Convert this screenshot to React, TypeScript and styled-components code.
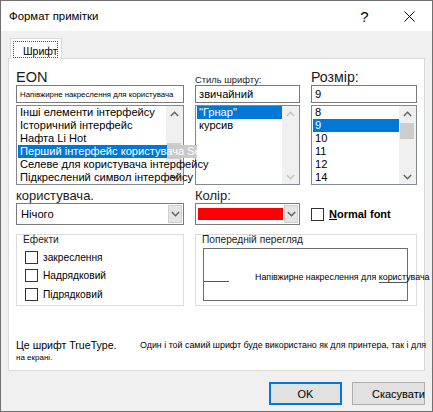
import React from 'react';
import styled, { createGlobalStyle } from 'styled-components';

const fontStack = `"Liberation Sans", "Noto Sans", Arial, sans-serif`;

const GlobalStyle = createGlobalStyle`
  * { box-sizing: border-box; }
  html, body { margin: 0; padding: 0; background: #ffffff; }
  body { font-family: ${fontStack}; color: #000; }
`;

const Window = styled.div`
  width: 433px;
  height: 412px;
  border: 1px solid #707070;
  background: #f0f0f0;
  display: flex;
  flex-direction: column;
  overflow: hidden;
`;

const TitleBar = styled.header`
  height: 30px;
  flex: none;
  background: #ffffff;
  display: flex;
  align-items: center;
  padding-left: 8px;
`;

const Title = styled.span`
  flex: 1;
  font-size: 11.4px;
`;

const TitleButton = styled.div`
  width: 45px;
  height: 30px;
  display: flex;
  align-items: center;
  justify-content: center;
  font-size: 15px;
`;

const Body = styled.div`
  flex: 1;
  display: flex;
  flex-direction: column;
  padding: 7px 7px 0 7px;
`;

const TabStrip = styled.div`
  display: flex;
  padding-left: 2px;
`;

const Tab = styled.div`
  position: relative;
  z-index: 1;
  width: 52px;
  height: 21px;
  margin-bottom: -1px;
  padding: 2px 3px 1px 2px;
  background: #ffffff;
  border: 1px solid #d9d9d9;
  border-bottom: none;
`;

const FocusRing = styled.div`
  height: 100%;
  border: 1px dotted #555;
  font-size: 10.5px;
  line-height: 15px;
  padding-left: 9px;
  padding-top: 2px;
`;

const Panel = styled.section`
  height: 313px;
  background: #ffffff;
  border: 1px solid #d9d9d9;
  padding: 10px 7px 0 7px;
`;

const ColumnGrid = styled.div`
  display: grid;
  grid-template-columns: 168px 105px 106px;
  column-gap: 11px;
`;

const Field = styled.div`
  display: flex;
  flex-direction: column;
`;

const Label = styled.div<{ $size: number }>`
  height: 16px;
  display: flex;
  align-items: flex-end;
  font-size: ${p => p.$size}px;
  line-height: ${p => p.$size + 2}px;
  color: #1b1b1b;
  white-space: nowrap;
`;

const TextBox = styled.div<{ $size?: number }>`
  height: 18px;
  border: 1px solid #7a7a7a;
  padding: 0 3px;
  display: flex;
  align-items: center;
  font-size: ${p => p.$size ?? 11.2}px;
  white-space: nowrap;
  overflow: hidden;
`;

const ListBox = styled.div`
  margin-top: 2px;
  height: 80px;
  border: 1px solid #828790;
  display: flex;
`;

const Items = styled.div`
  position: relative;
  z-index: 1;
  flex: 1;
  min-width: 0;
`;

const Item = styled.div<{ $selected?: boolean; $spill?: number }>`
  height: 13px;
  line-height: 13px;
  margin-left: 1px;
  padding-left: 2px;
  font-size: 11.1px;
  white-space: nowrap;
  color: ${p => (p.$selected ? '#ffffff' : '#000000')};
  background: ${p =>
    p.$selected
      ? p.$spill
        ? `linear-gradient(90deg, #0078d7 0 calc(100% - ${p.$spill}px), #c9c9c9 calc(100% - ${p.$spill}px))`
        : '#0078d7'
      : 'transparent'};
  width: ${p => (p.$spill ? `calc(100% + ${p.$spill}px)` : 'auto')};
  overflow: ${p => (p.$spill ? 'hidden' : 'visible')};
`;

const ScrollBar = styled.div`
  width: 17px;
  flex: none;
  background: #f0f0f0;
  display: flex;
  flex-direction: column;
`;

const ScrollArrow = styled.div`
  height: 15px;
  display: flex;
  align-items: center;
  justify-content: center;
`;

const Track = styled.div`
  flex: 1;
`;

const Thumb = styled.div<{ $top: number }>`
  margin-top: ${p => p.$top}px;
  margin-left: 1px;
  width: 14px;
  height: 16px;
  background: #cdcdcd;
`;

const MidGrid = styled(ColumnGrid)`
  margin-top: 2px;
`;

const Select = styled.div`
  height: 22px;
  border: 1px solid #7a7a7a;
  background: #ffffff;
  display: flex;
  align-items: stretch;
`;

const SelectValue = styled.div`
  flex: 1;
  display: flex;
  align-items: center;
  padding-left: 4px;
  font-size: 11.2px;
`;

const Swatch = styled.div<{ $color: string }>`
  flex: 1;
  margin: 4px 1px 4px 2px;
  background: ${p => p.$color};
`;

const DropButton = styled.div`
  width: 14px;
  margin: 1px 1px 1px 0;
  background: #e5e5e5;
  border: 1px solid #cfcfcf;
  display: flex;
  align-items: center;
  justify-content: center;
`;

const CheckRow = styled.label<{ $bold?: boolean }>`
  display: flex;
  align-items: center;
  gap: 5px;
  font-size: ${p => (p.$bold ? 11 : 10.2)}px;
  font-weight: ${p => (p.$bold ? 700 : 400)};
  white-space: nowrap;
`;

const Box = styled.span`
  width: 13px;
  height: 13px;
  flex: none;
  border: 1px solid #333333;
  background: #ffffff;
`;

const CheckCell = styled.div`
  align-self: end;
  height: 22px;
  display: flex;
  align-items: center;
`;

const GroupGrid = styled.div`
  margin-top: 9px;
  display: grid;
  grid-template-columns: 168px 222px;
  column-gap: 11px;
  height: 72px;
`;

const Group = styled.div`
  border: 1px solid #dcdcdc;
  min-width: 0;
  display: flex;
  flex-direction: column;
`;

const Legend = styled.div`
  margin: -1px 0 0 6px;
  font-size: 10.2px;
  line-height: 12px;
  color: #1b1b1b;
  white-space: nowrap;
`;

const Effects = styled.div`
  margin-top: 2px;
  padding-left: 8px;
  display: flex;
  flex-direction: column;
`;

const EffectRow = styled(CheckRow)`
  height: 18.5px;
`;

const PreviewPane = styled.div`
  position: relative;
  margin: 2px 0 0 7px;
  width: 205px;
  height: 53px;
  border: 1px solid #6d6d6d;
  display: flex;
  align-items: center;
  padding-top: 4px;
`;

const BaseMark = styled.span`
  width: 25px;
  height: 1px;
  flex: none;
  background: #555555;
  align-self: center;
  margin-top: 9px;
`;

const SampleText = styled.span`
  margin-left: 26px;
  font-size: 8.9px;
  white-space: nowrap;
`;

const RightMark = styled.span`
  position: absolute;
  right: 0;
  top: 33px;
  width: 28px;
  height: 1px;
  background: #555555;
`;

const Footer = styled.div`
  margin-top: 32px;
  display: flex;
`;

const FooterLead = styled.div`
  width: 124px;
  flex: none;
  display: flex;
  flex-direction: column;
`;

const FooterLine = styled.div<{ $size: number; $line: number }>`
  font-size: ${p => p.$size}px;
  line-height: ${p => p.$line}px;
  white-space: nowrap;
`;

const ButtonRow = styled.div`
  margin-top: 11px;
  display: flex;
  justify-content: flex-end;
  gap: 10px;
`;

const DialogButton = styled.div<{ $primary?: boolean }>`
  width: 73px;
  height: 23px;
  background: #e1e1e1;
  border: 1px solid ${p => (p.$primary ? '#0078d7' : '#adadad')};
  box-shadow: ${p => (p.$primary ? 'inset 0 0 0 1px #0078d7' : 'none')};
  display: flex;
  align-items: center;
  justify-content: ${p => (p.$primary ? 'center' : 'flex-start')};
  padding-left: ${p => (p.$primary ? 0 : 19)}px;
  font-size: 11px;
  white-space: nowrap;
`;

const Chevron = ({ up, color = '#606060' }: { up?: boolean; color?: string }) => (
  <svg width="9" height="6" viewBox="0 0 9 6">
    <polyline
      points={up ? '0.8,5 4.5,1.2 8.2,5' : '0.8,1 4.5,4.8 8.2,1'}
      fill="none"
      stroke={color}
      strokeWidth="1.4"
    />
  </svg>
);

const CloseIcon = () => (
  <svg width="11" height="11" viewBox="0 0 11 11">
    <path d="M0.5 0.5 L10.5 10.5 M10.5 0.5 L0.5 10.5" stroke="#000" strokeWidth="1" />
  </svg>
);

type ListProps = {
  items: string[];
  selected: number;
  thumbTop?: number;
  disabled?: boolean;
  spill?: number;
};

const List = ({ items, selected, thumbTop, disabled, spill }: ListProps) => {
  const arrow = disabled ? '#c4c4c4' : '#606060';
  return (
    <ListBox>
      <Items>
        {items.map((text, i) => (
          <Item key={text} $selected={i === selected} $spill={i === selected ? spill : undefined}>
            {text}
          </Item>
        ))}
      </Items>
      <ScrollBar>
        <ScrollArrow>
          <Chevron up color={arrow} />
        </ScrollArrow>
        <Track>{thumbTop !== undefined && <Thumb $top={thumbTop} />}</Track>
        <ScrollArrow>
          <Chevron color={arrow} />
        </ScrollArrow>
      </ScrollBar>
    </ListBox>
  );
};

const fonts = [
  'Інші елементи інтерфейсу',
  'Історичний інтерфейс',
  'Нафта Li Hot',
  'Перший інтерфейс користувача Semibold',
  'Селеве для користувача інтерфейсу',
  'Підкреслений символ інтерфейсу',
];

const styles = ['"Грнар"', 'курсив'];
const sizes = ['8', '9', '10', '11', '12', '14'];

export default function App() {
  return (
    <>
      <GlobalStyle />
      <Window>
        <TitleBar>
          <Title>Формат примітки</Title>
          <TitleButton>?</TitleButton>
          <TitleButton>
            <CloseIcon />
          </TitleButton>
        </TitleBar>
        <Body>
          <TabStrip>
            <Tab>
              <FocusRing>Шрифт</FocusRing>
            </Tab>
          </TabStrip>
          <Panel>
            <ColumnGrid>
              <Field>
                <Label $size={14.5}>EON</Label>
                <TextBox $size={7.8}>Напівжирне накреслення для користувача</TextBox>
                <List items={fonts} selected={3} thumbTop={22} spill={30} />
              </Field>
              <Field>
                <Label $size={9.4}>Стиль шрифту:</Label>
                <TextBox>звичайний</TextBox>
                <List items={styles} selected={0} disabled />
              </Field>
              <Field>
                <Label $size={14.2}>Розмір:</Label>
                <TextBox>9</TextBox>
                <List items={sizes} selected={1} thumbTop={2} />
              </Field>
            </ColumnGrid>
            <MidGrid>
              <Field>
                <Label $size={13}>користувача.</Label>
                <Select>
                  <SelectValue>Нічого</SelectValue>
                  <DropButton>
                    <Chevron />
                  </DropButton>
                </Select>
              </Field>
              <Field>
                <Label $size={13}>Колір:</Label>
                <Select>
                  <Swatch $color="#ff0000" />
                  <DropButton>
                    <Chevron />
                  </DropButton>
                </Select>
              </Field>
              <CheckCell>
                <CheckRow $bold>
                  <Box />
                  <span>
                    <u>N</u>ormal font
                  </span>
                </CheckRow>
              </CheckCell>
            </MidGrid>
            <GroupGrid>
              <Group>
                <Legend>Ефекти</Legend>
                <Effects>
                  <EffectRow>
                    <Box />
                    закреслення
                  </EffectRow>
                  <EffectRow>
                    <Box />
                    Надрядковий
                  </EffectRow>
                  <EffectRow>
                    <Box />
                    Підрядковий
                  </EffectRow>
                </Effects>
              </Group>
              <Group>
                <Legend>Попередній перегляд</Legend>
                <PreviewPane>
                  <BaseMark />
                  <SampleText>Напівжирне накреслення для користувача</SampleText>
                  <RightMark />
                </PreviewPane>
              </Group>
            </GroupGrid>
            <Footer>
              <FooterLead>
                <FooterLine $size={10.6} $line={14}>Це шрифт TrueType.</FooterLine>
                <FooterLine $size={8} $line={11}>на екрані.</FooterLine>
              </FooterLead>
              <FooterLine $size={8.9} $line={14}>
                Один і той самий шрифт буде використано як для принтера, так і для
              </FooterLine>
            </Footer>
          </Panel>
          <ButtonRow>
            <DialogButton $primary>OK</DialogButton>
            <DialogButton>Скасувати</DialogButton>
          </ButtonRow>
        </Body>
      </Window>
    </>
  );
}
